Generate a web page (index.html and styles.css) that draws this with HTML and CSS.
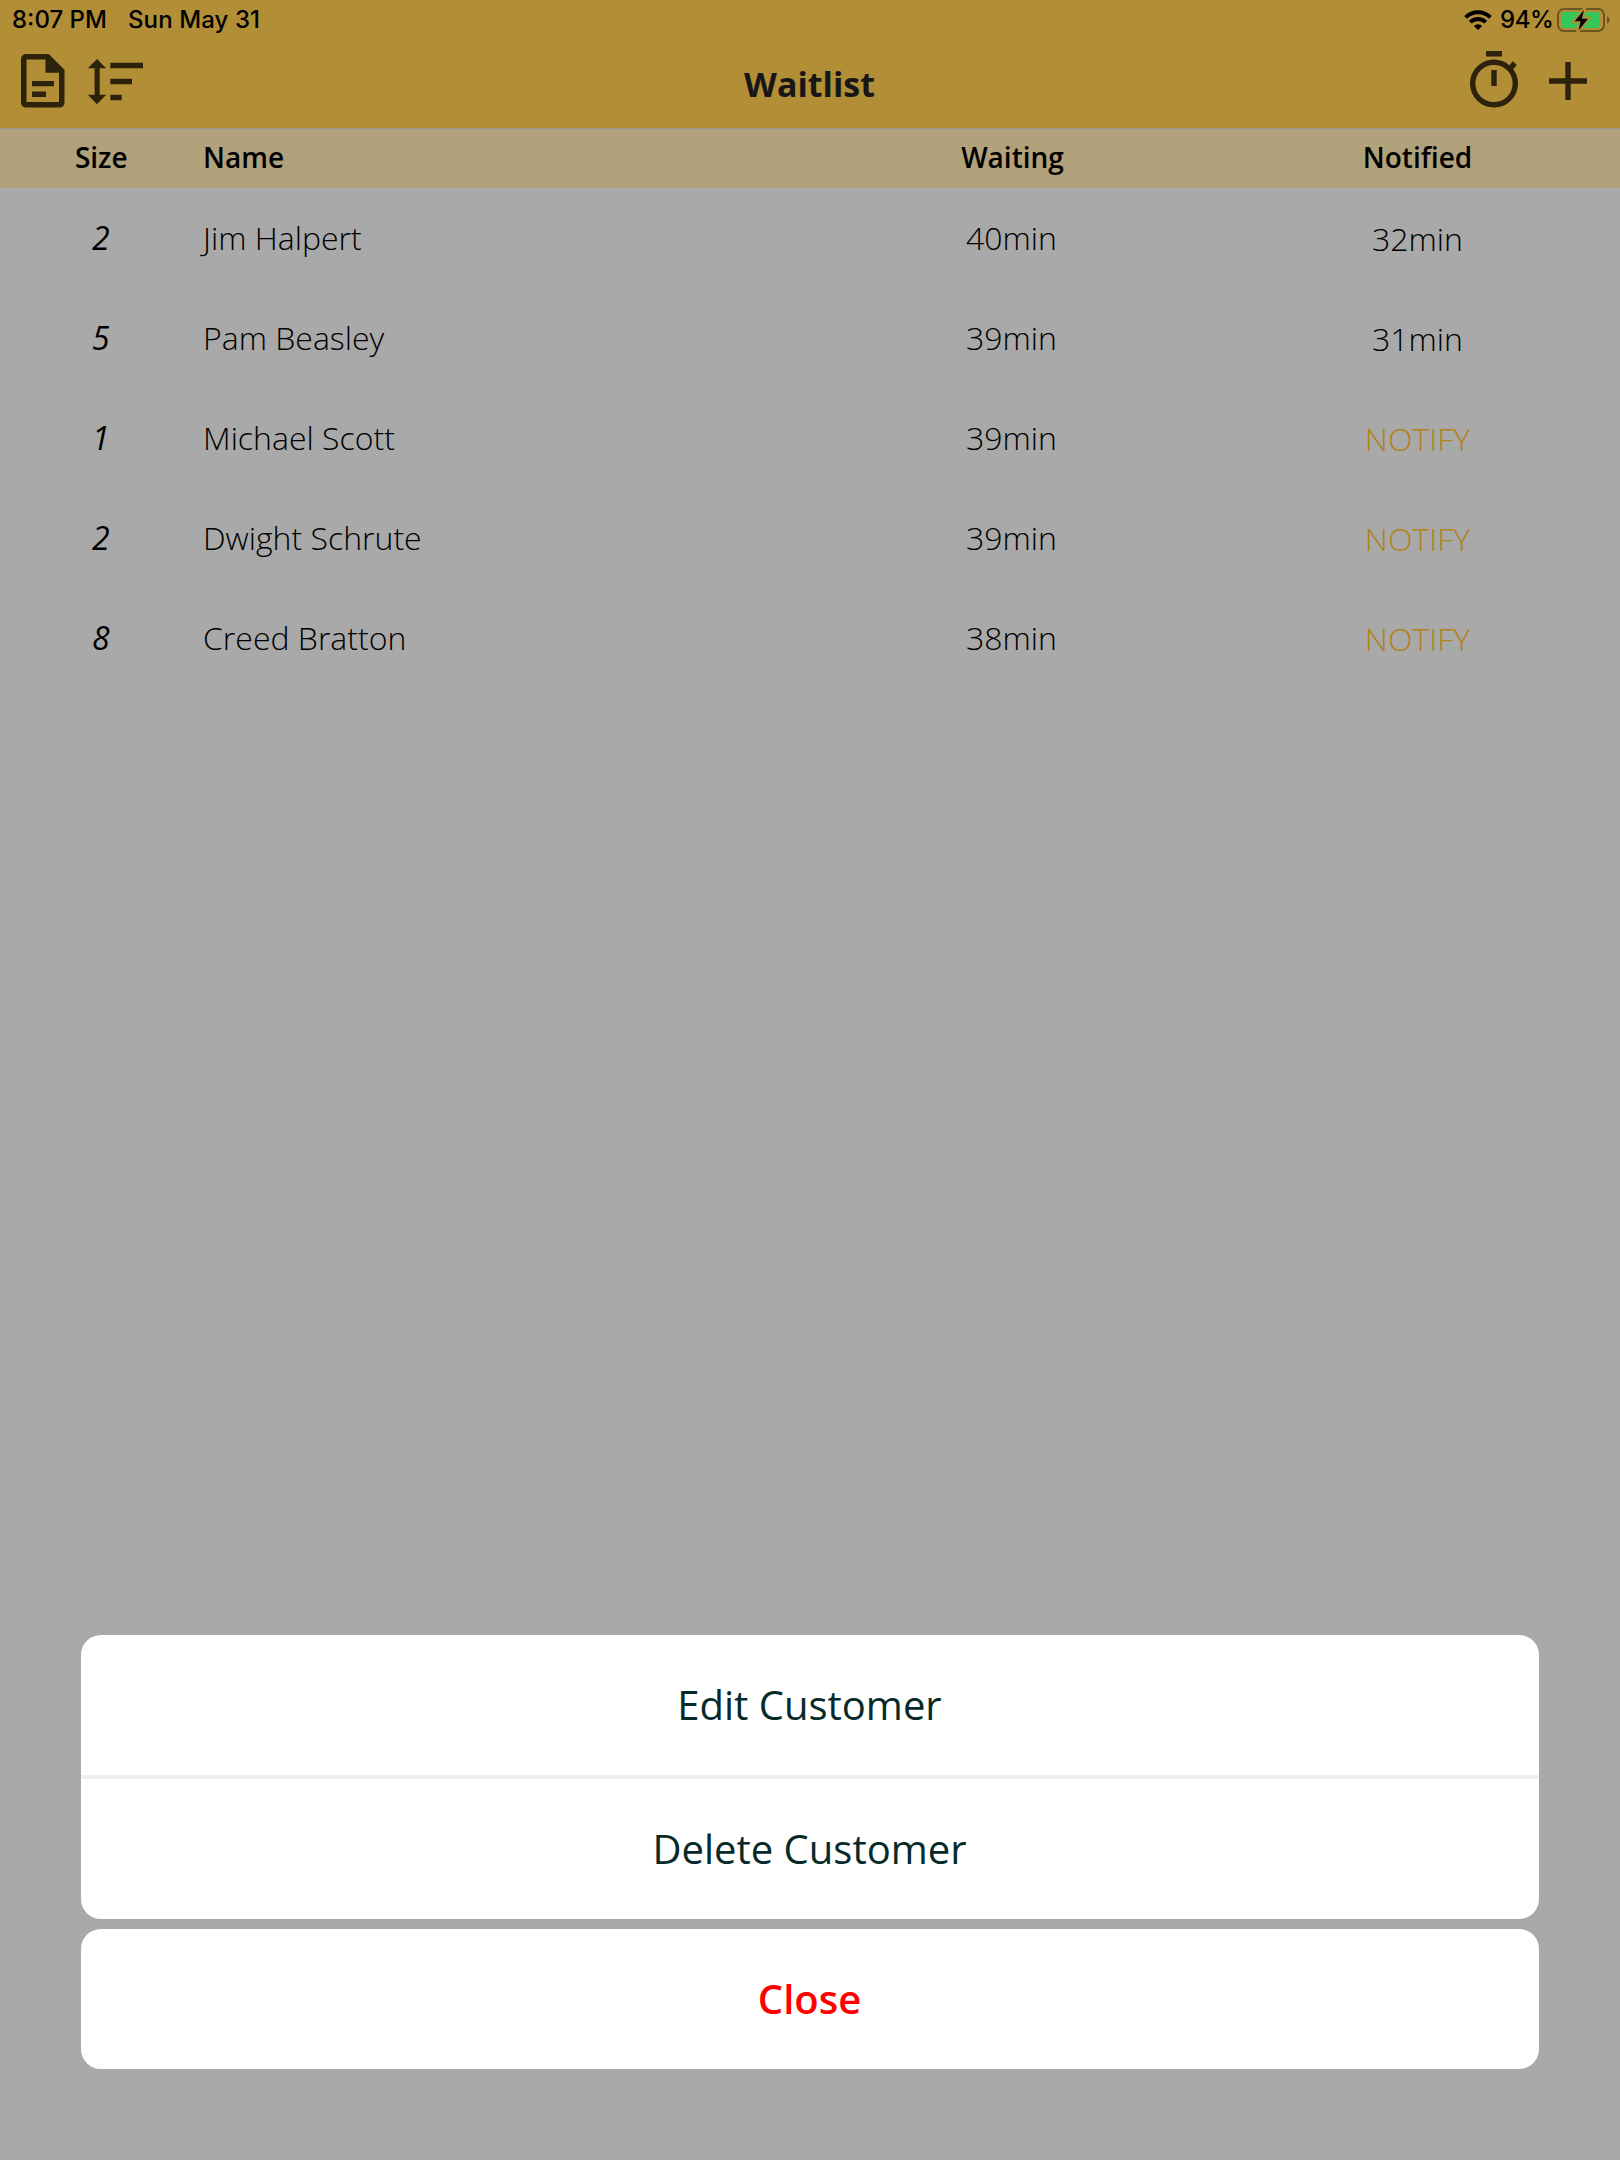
FILE: index.html
```html
<!DOCTYPE html>
<html lang="en">
<head>
<meta charset="utf-8">
<title>Waitlist</title>
<link rel="stylesheet" href="styles.css">
</head>
<body>
<div class="app">
  <header class="top">
    <div class="status">
      <span class="clock">8:07 PM</span>
      <span class="date">Sun May 31</span>
      <svg class="wifi" width="28" height="20" viewBox="0 0 28 20"><g fill="none" stroke="#000" stroke-width="4"><path d="M1.6 7.3a17.6 17.6 0 0 1 24.8 0"/><path d="M6.2 12.2a11 11 0 0 1 15.6 0"/></g><path d="M14 20l-4.1-4.1a5.9 5.9 0 0 1 8.2 0z"/></svg>
      <span class="percent">94%</span>
      <svg class="battery" width="54" height="26" viewBox="0 0 54 26"><rect x="1" y="2" width="46" height="22" rx="6" fill="none" stroke="#6b5520" stroke-width="2"/><path d="M50 9.3c3.6 1.400 3.600 6 0 7.400z" fill="#6b5520"/><rect x="4" y="5" width="38.500" height="16" rx="3.500" fill="#34c759"/><path d="M27.800 1L17 14.700h6.300L20.500 25 31.600 11.300h-6.400z" stroke="#b28e36" stroke-width="3"/><path d="M27 3L17.700 14.200h6L21.500 23.500 31 11.800h-6.200z"/></svg>
    </div>
    <nav class="bar">
      <svg class="i-doc" width="44" height="54" viewBox="0 0 44 54"><path fill-rule="evenodd" d="M5.500 0h22.200L43.500 15.700V48q0 5.500-5.500 5.500H5.500Q0 53.500 0 48V5.500Q0 0 5.500 0zM5.500 5.500V48H38V18.700H24.500V5.500z"/><path d="M11 27h22v5.300H11zM11 37.600h14V43H11z"/></svg>
      <svg class="i-sort" width="55" height="46" viewBox="0 0 55 46"><path d="M9 0l9.200 9.300h-6.500v26.500h6.500L9 45.200-.2 35.800h6.800V9.300H-.2zM22.300 3.700H55v5.500H22.300zM22.300 19.700H44v5.500H22.300zM22.300 35.800h11.400v5.400H22.300z"/></svg>
      <h1 class="title">Waitlist</h1>
      <svg class="i-timer" width="48" height="57" viewBox="0 0 48 57"><path d="M16 0h16v5.500H16zM21.300 19h5.400v16h-5.400z"/><circle cx="24" cy="32.500" r="21.300" fill="none" stroke="#2d220b" stroke-width="5.400"/><path d="M37.800 16.300l5-6 4 3.700-5.200 6z"/></svg>
      <svg class="i-plus" width="38" height="38" viewBox="0 0 38 38"><path d="M16.300 0h5.400v16.300H38v5.400H21.700V38h-5.400V21.700H0v-5.400h16.300z"/></svg>
    </nav>
  </header>
  <div class="row head"><span>Size</span><span class="name">Name</span><span>Waiting</span><span>Notified</span></div>
  <main class="list">
    <div class="row"><span class="size">2</span><span class="name">Jim Halpert</span><span class="waiting">40min</span><span class="notified">32min</span></div>
    <div class="row"><span class="size">5</span><span class="name">Pam Beasley</span><span class="waiting">39min</span><span class="notified">31min</span></div>
    <div class="row"><span class="size">1</span><span class="name">Michael Scott</span><span class="waiting">39min</span><span class="notified action">NOTIFY</span></div>
    <div class="row"><span class="size">2</span><span class="name">Dwight Schrute</span><span class="waiting">39min</span><span class="notified action">NOTIFY</span></div>
    <div class="row"><span class="size">8</span><span class="name">Creed Bratton</span><span class="waiting">38min</span><span class="notified action">NOTIFY</span></div>
  </main>
  <section class="sheet">
    <div class="card">
      <button class="option">Edit Customer</button>
      <button class="option">Delete Customer</button>
    </div>
    <div class="card">
      <button class="option close">Close</button>
    </div>
  </section>
</div>
</body>
</html>
```
FILE: styles.css
```css
* { box-sizing: border-box; }
body { margin: 0; background: #a9a9a9; font-family: "Open Sans", sans-serif; color: #000; }
.app { height: 2160px; display: flex; flex-direction: column; }
.top { height: 129px; background: #b28e36; border-bottom: 1px solid #999; }
.status { height: 40px; padding: 0 9px 0 12px; display: flex; align-items: center; font: 450 24px/40px Inter, sans-serif; white-space: nowrap; }
.clock { width: 95px; }
.date { margin-left: 21px; letter-spacing: 0.1px; }
.wifi { margin-left: auto; }
.percent { width: 51px; margin-left: 8px; letter-spacing: -0.4px; }
.battery { margin-left: 6px; }
.bar { height: 88px; padding: 0 33px 0 20px; display: grid; grid-template-columns: 68px 55px 1fr 48px 69px; align-items: start; fill: #2d220b; }
.bar svg { overflow: visible; }
.i-doc { margin: 14px 0 0 0.5px; }
.i-sort { margin-top: 19px; }
.i-timer { margin-top: 11px; }
.i-plus { margin-top: 22px; justify-self: end; }
.title { margin: 20px 0 0; padding-left: 6px; text-align: center; font-size: 34px; line-height: 48px; font-weight: 700; color: #171717; }
.row { display: grid; grid-template-columns: 1fr 3fr 2fr 2fr; height: 100px; align-items: center; text-align: center; font-size: 32px; font-weight: 300; line-height: 44px; }
.row .name { padding-left: 0.5px; text-align: left; }
.head { height: 59px; padding-bottom: 3px; background: #b2a27b; font-size: 28px; font-weight: 600; line-height: 38px; }
.size { padding-right: 1px; font-style: italic; font-weight: 400; }
.waiting { padding-right: 2px; }
.notified { padding-top: 2px; }
.action { color: #b08218; }
.sheet { margin: auto 81px 91px; display: flex; flex-direction: column; gap: 10px; }
.card { background: #fff; border-radius: 20px; overflow: hidden; }
.option { display: block; width: 100%; height: 140px; padding: 0 1px 0 0; border: 0; background: none; font: 400 40px/54px "Open Sans", sans-serif; color: #062a28; }
.option + .option { height: 144px; border-top: 4px solid #eee; }
.close { font-weight: 600; color: #f00; }
```
